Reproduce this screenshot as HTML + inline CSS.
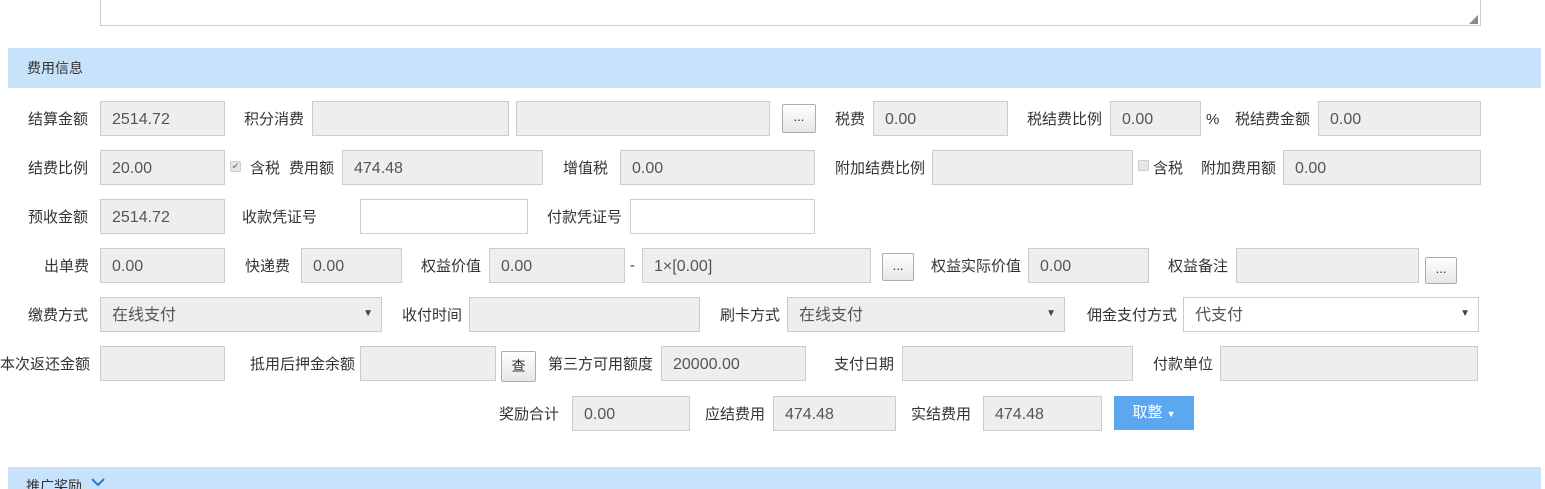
<!DOCTYPE html>
<html><head><meta charset="utf-8"><style>
html,body{margin:0;height:489px;overflow:hidden}
body{width:1545px;background:#fff;position:relative;font-family:"Liberation Sans","Noto Sans CJK SC",sans-serif;font-size:15px;color:#333}
.a{position:absolute;white-space:nowrap}
.l{position:absolute;white-space:nowrap;line-height:20px}
.i{position:absolute;box-sizing:border-box;border:1px solid #ccc;background:#eee;color:#555;font-size:16px;line-height:35px;padding-left:11px;height:35px}
.w{background:#fff}
.b{position:absolute;box-sizing:border-box;border:1px solid #adadad;background:linear-gradient(#fff,#e6e6e6);border-radius:2px;text-align:center;font-size:13px;color:#333}
.band{position:absolute;left:8px;width:1533px;background:#c9e2fb}
.s::after{content:"▼";position:absolute;right:8px;top:0;font-size:10px;color:#444;line-height:32px}
.cb{position:absolute;width:11px;height:11px;border:1px solid #ccc;background:#e6e6e6;border-radius:2px;box-sizing:border-box;font-size:9px;line-height:9px;text-align:center;color:#888}
</style></head><body>
<div class="a" style="left:100px;top:-5px;width:1381px;height:31px;border:1px solid #ccc;box-sizing:border-box"></div>
<div class="a" style="left:1469px;top:13px;font-size:9px;color:#888">◢</div>
<div class="band" style="top:48px;height:40px"></div>
<div class="l" style="left:27px;top:58px;font-size:14px">费用信息</div>

<div class="l" style="left:28px;top:110px">结算金额</div><div class="i" style="left:100px;top:101px;width:125px">2514.72</div>
<div class="l" style="left:244px;top:110px">积分消费</div><div class="i" style="left:312px;top:101px;width:197px"></div><div class="i" style="left:516px;top:101px;width:254px"></div>
<div class="b" style="left:782px;top:104px;width:34px;height:29px;line-height:24px">...</div>
<div class="l" style="left:835px;top:110px">税费</div><div class="i" style="left:873px;top:101px;width:135px">0.00</div>
<div class="l" style="left:1027px;top:110px">税结费比例</div><div class="i" style="left:1110px;top:101px;width:91px">0.00</div>
<div class="l" style="left:1206px;top:110px">%</div>
<div class="l" style="left:1235px;top:110px">税结费金额</div><div class="i" style="left:1318px;top:101px;width:163px">0.00</div>

<div class="l" style="left:28px;top:159px">结费比例</div><div class="i" style="left:100px;top:150px;width:125px">20.00</div>
<div class="cb" style="left:230px;top:161px">✔</div><div class="l" style="left:250px;top:159px">含税</div>
<div class="l" style="left:289px;top:159px">费用额</div><div class="i" style="left:342px;top:150px;width:201px">474.48</div>
<div class="l" style="left:563px;top:159px">增值税</div><div class="i" style="left:620px;top:150px;width:195px">0.00</div>
<div class="l" style="left:835px;top:159px">附加结费比例</div><div class="i" style="left:932px;top:150px;width:201px"></div>
<div class="cb" style="left:1138px;top:160px"></div><div class="l" style="left:1153px;top:159px">含税</div>
<div class="l" style="left:1201px;top:159px">附加费用额</div><div class="i" style="left:1283px;top:150px;width:198px">0.00</div>

<div class="l" style="left:28px;top:208px">预收金额</div><div class="i" style="left:100px;top:199px;width:125px">2514.72</div>
<div class="l" style="left:242px;top:208px">收款凭证号</div><div class="i w" style="left:360px;top:199px;width:168px"></div>
<div class="l" style="left:547px;top:208px">付款凭证号</div><div class="i w" style="left:630px;top:199px;width:185px"></div>

<div class="l" style="left:44px;top:257px">出单费</div><div class="i" style="left:100px;top:248px;width:125px">0.00</div>
<div class="l" style="left:245px;top:257px">快递费</div><div class="i" style="left:301px;top:248px;width:101px">0.00</div>
<div class="l" style="left:421px;top:257px">权益价值</div><div class="i" style="left:489px;top:248px;width:136px">0.00</div>
<div class="l" style="left:630px;top:256px">-</div>
<div class="i" style="left:642px;top:248px;width:229px">1×[0.00]</div>
<div class="b" style="left:882px;top:253px;width:32px;height:28px;line-height:23px">...</div>
<div class="l" style="left:931px;top:257px">权益实际价值</div><div class="i" style="left:1028px;top:248px;width:121px">0.00</div>
<div class="l" style="left:1168px;top:257px">权益备注</div><div class="i" style="left:1236px;top:248px;width:183px"></div>
<div class="b" style="left:1425px;top:257px;width:32px;height:27px;line-height:22px">...</div>

<div class="l" style="left:28px;top:306px">缴费方式</div><div class="i s" style="left:100px;top:297px;width:282px">在线支付</div>
<div class="l" style="left:402px;top:306px">收付时间</div><div class="i" style="left:469px;top:297px;width:231px"></div>
<div class="l" style="left:720px;top:306px">刷卡方式</div><div class="i s" style="left:787px;top:297px;width:278px">在线支付</div>
<div class="l" style="left:1087px;top:306px">佣金支付方式</div><div class="i w s" style="left:1183px;top:297px;width:296px">代支付</div>

<div class="l" style="left:0px;top:355px">本次返还金额</div><div class="i" style="left:100px;top:346px;width:125px"></div>
<div class="l" style="left:250px;top:355px">抵用后押金余额</div><div class="i" style="left:360px;top:346px;width:136px"></div>
<div class="b" style="left:501px;top:351px;width:35px;height:31px;line-height:28px;font-size:14px">查</div>
<div class="l" style="left:548px;top:355px">第三方可用额度</div><div class="i" style="left:661px;top:346px;width:145px">20000.00</div>
<div class="l" style="left:834px;top:355px">支付日期</div><div class="i" style="left:902px;top:346px;width:231px"></div>
<div class="l" style="left:1153px;top:355px">付款单位</div><div class="i" style="left:1220px;top:346px;width:258px"></div>

<div class="l" style="left:499px;top:405px">奖励合计</div><div class="i" style="left:572px;top:396px;width:118px">0.00</div>
<div class="l" style="left:705px;top:405px">应结费用</div><div class="i" style="left:773px;top:396px;width:123px">474.48</div>
<div class="l" style="left:911px;top:405px">实结费用</div><div class="i" style="left:983px;top:396px;width:119px">474.48</div>
<div class="a" style="left:1114px;top:396px;width:80px;height:34px;background:#5ba8f0;color:#fff;text-align:center;line-height:34px;font-size:15px">取整 <span style="font-size:9px">▼</span></div>

<div class="band" style="top:467px;height:30px"></div>
<div class="l" style="left:26px;top:476px;font-size:14px">推广奖励</div>
<svg class="a" style="left:91px;top:478px" width="14" height="9"><path d="M1 1L7 7L13 1" stroke="#2a78c8" stroke-width="2" fill="none"/></svg>
</body></html>
